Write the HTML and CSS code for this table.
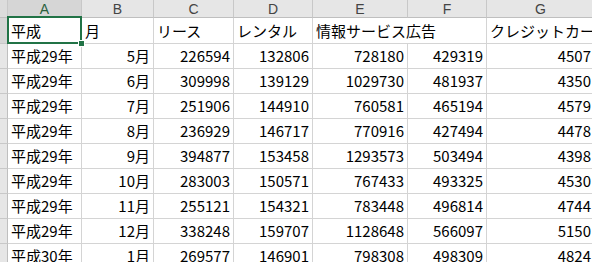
FILE: index.html
```html
<!DOCTYPE html>
<html lang="ja">
<head>
<meta charset="utf-8">
<link rel="stylesheet" href="styles.css">
</head>
<body>
<div class="sheet">
  <div class="ch corner"></div>
  <div class="ch sel">A</div>
  <div class="ch">B</div>
  <div class="ch">C</div>
  <div class="ch">D</div>
  <div class="ch">E</div>
  <div class="ch">F</div>
  <div class="ch">G</div>

  <div class="rh first"></div>
  <div class="c txt active">平成</div>
  <div class="c txt">月</div>
  <div class="c txt">リース</div>
  <div class="c txt">レンタル</div>
  <div class="c txt span2">情報サービス広告</div>
  <div class="c txt">クレジットカード</div>

  <div class="rh"></div><div class="c txt">平成29年</div><div class="c num">5月</div><div class="c num">226594</div><div class="c num">132806</div><div class="c num">728180</div><div class="c num">429319</div><div class="c num">4507</div>
  <div class="rh"></div><div class="c txt">平成29年</div><div class="c num">6月</div><div class="c num">309998</div><div class="c num">139129</div><div class="c num">1029730</div><div class="c num">481937</div><div class="c num">4350</div>
  <div class="rh"></div><div class="c txt">平成29年</div><div class="c num">7月</div><div class="c num">251906</div><div class="c num">144910</div><div class="c num">760581</div><div class="c num">465194</div><div class="c num">4579</div>
  <div class="rh"></div><div class="c txt">平成29年</div><div class="c num">8月</div><div class="c num">236929</div><div class="c num">146717</div><div class="c num">770916</div><div class="c num">427494</div><div class="c num">4478</div>
  <div class="rh"></div><div class="c txt">平成29年</div><div class="c num">9月</div><div class="c num">394877</div><div class="c num">153458</div><div class="c num">1293573</div><div class="c num">503494</div><div class="c num">4398</div>
  <div class="rh"></div><div class="c txt">平成29年</div><div class="c num">10月</div><div class="c num">283003</div><div class="c num">150571</div><div class="c num">767433</div><div class="c num">493325</div><div class="c num">4530</div>
  <div class="rh"></div><div class="c txt">平成29年</div><div class="c num">11月</div><div class="c num">255121</div><div class="c num">154321</div><div class="c num">783448</div><div class="c num">496814</div><div class="c num">4744</div>
  <div class="rh"></div><div class="c txt">平成29年</div><div class="c num">12月</div><div class="c num">338248</div><div class="c num">159707</div><div class="c num">1128648</div><div class="c num">566097</div><div class="c num">5150</div>
  <div class="rh"></div><div class="c txt">平成30年</div><div class="c num">1月</div><div class="c num">269577</div><div class="c num">146901</div><div class="c num">798308</div><div class="c num">498309</div><div class="c num">4824</div>
</div>
</body>
</html>
```

FILE: styles.css
```css
html, body {
  margin: 0;
  padding: 0;
  background: #ffffff;
  overflow: hidden;
  width: 592px;
  height: 262px;
}

.sheet {
  display: grid;
  grid-template-columns: 8px 74px 72px 80px 79px 95px 79px 108px;
  grid-template-rows: 18px 26px repeat(9, 25px);
  width: 595px;
  font-family: "Liberation Sans Narrow", "Noto Sans CJK JP", sans-serif;
  font-size: 15px;
  color: #000;
}

.ch {
  background: #e6e6e6;
  border-right: 1px solid #c8c8c8;
  border-bottom: 1px solid #bfbfbf;
  color: #444;
  font-family: "Liberation Sans", "Noto Sans CJK JP", sans-serif;
  font-size: 14px;
  display: flex;
  align-items: center;
  justify-content: center;
}

.ch.corner {
  background: #dcdcdc;
}

.ch.sel {
  background: #d6d6d6;
  color: #2b5f3d;
}

.rh {
  background: #e6e6e6;
  border-right: 1px solid #bfbfbf;
  border-bottom: 1px solid #c8c8c8;
}

.rh.first {
  background: #d6d6d6;
}

.c {
  border-right: 1px solid #d4d4d4;
  border-bottom: 1px solid #d4d4d4;
  display: flex;
  align-items: flex-end;
  padding: 0 3px 2px 3px;
  white-space: nowrap;
  overflow: visible;
  line-height: 20px;
}

.c.txt {
  justify-content: flex-start;
}

.c.num {
  justify-content: flex-end;
}

.c.span2 {
  grid-column: span 2;
}

.c.active {
  position: relative;
}

.c.active::after {
  content: "";
  position: absolute;
  left: -1px;
  top: -2px;
  right: -1px;
  bottom: -1px;
  border: 2px solid #217346;
}

.c.active::before {
  content: "";
  position: absolute;
  right: -4px;
  bottom: -4px;
  width: 5px;
  height: 5px;
  background: #217346;
  border: 1px solid #ffffff;
  z-index: 2;
}
```
